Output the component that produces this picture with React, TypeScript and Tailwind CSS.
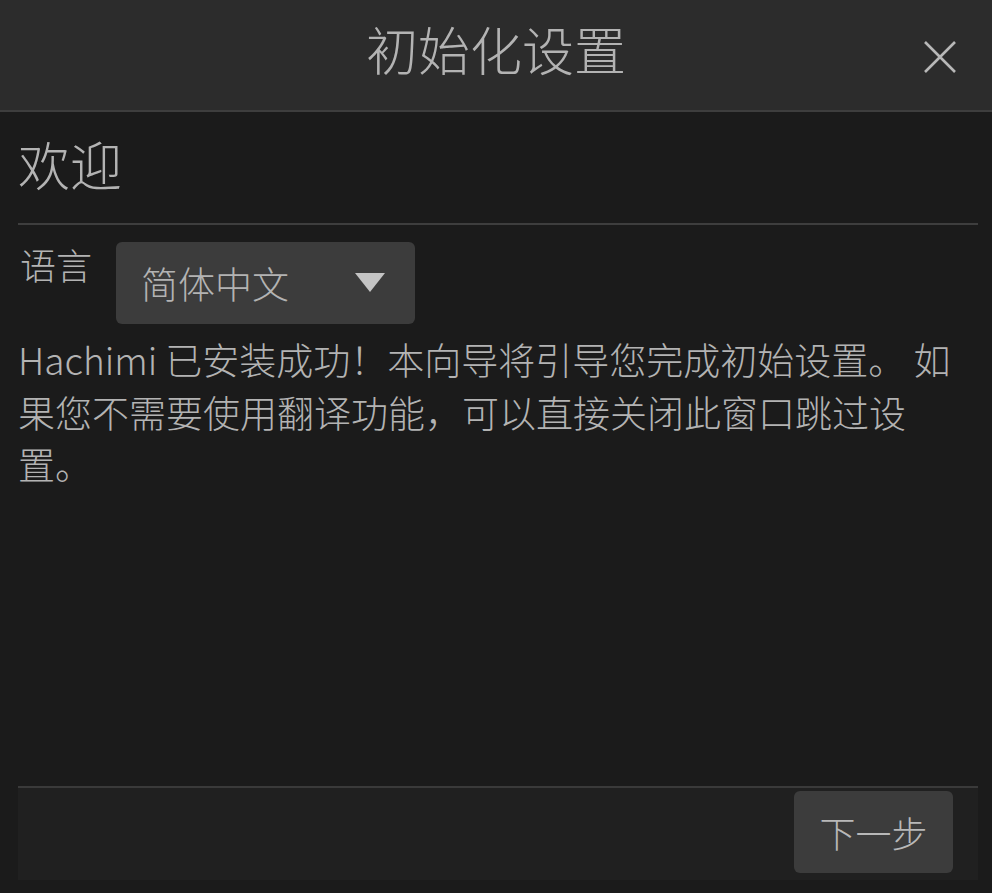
const font = { fontFamily: '"Noto Sans CJK SC", "Noto Sans", sans-serif' };

export default function App() {
  return (
    <div
      className="w-[992px] h-[893px] bg-[#1b1b1b] flex flex-col text-[#b3b3b3] font-light overflow-hidden"
      style={font}
    >
      {/* header */}
      <div className="relative h-[112px] shrink-0 bg-[#2c2c2c] border-b-2 border-[#3e3e3e] flex items-center justify-center">
        <div className="text-[52px] leading-none -mt-[13px]">初始化设置</div>
        <button className="absolute right-[35px] top-[40px] w-[34px] h-[34px] flex items-center justify-center">
          <svg width="34" height="34" viewBox="0 0 34 34" fill="none" stroke="#b8b8b8" strokeWidth="2.6">
            <path d="M2 2 L32 32 M32 2 L2 32" />
          </svg>
        </button>
      </div>

      {/* body */}
      <div className="flex-1 flex flex-col pl-[18px] pr-[14px]">
        <div className="pt-[16px] pb-[23px] text-[52px] leading-[72px]">欢迎</div>
        <div className="h-[2px] bg-[#3e3e3e]" />

        <div className="flex items-start gap-[24px] mt-[17px]">
          <div className="text-[36px] leading-none mt-[4px] ml-[2px]">语言</div>
          <div className="w-[299px] h-[82px] rounded-[6px] bg-[#3c3c3c] flex items-center justify-between pl-[25px] pr-[30px]">
            <span className="text-[37px] leading-none">简体中文</span>
            <svg width="30" height="20" viewBox="0 0 30 20">
              <path d="M0 0 H30 L15 19 Z" fill="#c4c4c4" />
            </svg>
          </div>
        </div>

        <p className="mt-[9px] text-[37px] leading-[52.5px]">
          Hachimi 已安装成功！本向导将引导您完成初始设置。 如果您不需要使用翻译功能，可以直接关闭此窗口跳过设置。
        </p>

        <div className="flex-1" />

        <div className="border-t-2 border-[#3a3a3a] bg-[#202020] h-[94px] flex justify-end items-start pt-[3px] pr-[25px] mb-[13px]">
          <button className="w-[159px] h-[82px] rounded-[6px] bg-[#3c3c3c] text-[36px] text-[#b8b8b8] flex items-center justify-center">
            下一步
          </button>
        </div>
      </div>
    </div>
  );
}
